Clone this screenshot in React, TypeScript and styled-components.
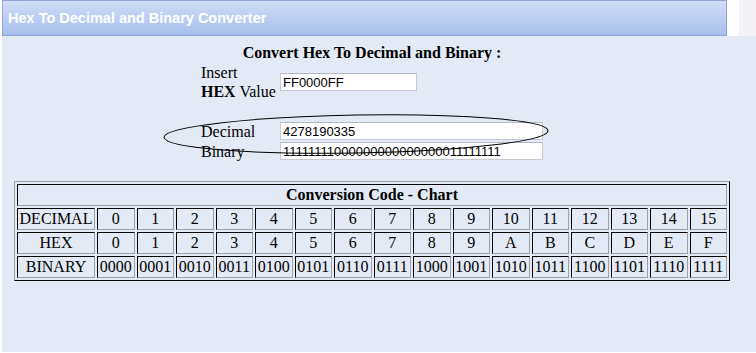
import styled, { createGlobalStyle } from "styled-components";

const GlobalStyle = createGlobalStyle`
  html, body {
    margin: 0;
    padding: 0;
    background: #fff;
  }
  body {
    font-family: "Liberation Serif", "Times New Roman", serif;
    font-size: 16px;
    color: #000;
  }
`;

const decimals = Array.from({ length: 16 }, (_, i) => i);

const App = () => {
  return (
    <Page>
      <GlobalStyle />
      <TopRow>
        <TitleBar>Hex To Decimal and Binary Converter</TitleBar>
        <ScrollStub />
      </TopRow>

      <Panel>
        <Content>
          <Heading>Convert Hex To Decimal and Binary :</Heading>

          <Form>
            <Row>
              <Label>
                Insert
                <br />
                <b>HEX</b> Value
              </Label>
              <Field $w={137} defaultValue="FF0000FF" />
            </Row>

            <Row $top={20}>
              <Label>Decimal</Label>
              <Field $w={263} defaultValue="4278190335" readOnly />
            </Row>
            <Row>
              <Label>Binary</Label>
              <Field $w={263} defaultValue="11111111000000000000000011111111" readOnly />
            </Row>

            <Ring viewBox="0 0 392 46" width="392" height="46">
              <ellipse cx="195" cy="23" rx="192" ry="19" fill="none" stroke="#000" strokeWidth="1" transform="rotate(-1 195 23)" />
            </Ring>
          </Form>

          <Chart>
            <colgroup>
              <Col $w={78} />
              {decimals.map((n) => (
                <Col key={n} />
              ))}
            </colgroup>
            <tbody>
              <tr>
                <Title colSpan={17}>Conversion Code - Chart</Title>
              </tr>
              <tr>
                <Cell>DECIMAL</Cell>
                {decimals.map((n) => (
                  <Cell key={n}>{n}</Cell>
                ))}
              </tr>
              <tr>
                <Cell>HEX</Cell>
                {decimals.map((n) => (
                  <Cell key={n}>{n.toString(16).toUpperCase()}</Cell>
                ))}
              </tr>
              <tr>
                <Cell>BINARY</Cell>
                {decimals.map((n) => (
                  <Cell key={n}>{n.toString(2).padStart(4, "0")}</Cell>
                ))}
              </tr>
            </tbody>
          </Chart>
        </Content>
      </Panel>
    </Page>
  );
};

export default App;

const Page = styled.div`
  width: 756px;
  height: 353px;
  overflow: hidden;
  background: #fff;
`;

const TopRow = styled.div`
  display: flex;
  height: 36px;
`;

const TitleBar = styled.div`
  margin-left: 2px;
  width: 725px;
  height: 36px;
  box-sizing: border-box;
  border: 1px solid #8fa5d6;
  background: linear-gradient(#d0dcf7, #a8bfee);
  color: #fff;
  font-family: "Liberation Sans", Arial, sans-serif;
  font-weight: bold;
  font-size: 14.5px;
  padding-left: 5px;
  padding-bottom: 1px;
  display: flex;
  align-items: center;
`;

const ScrollStub = styled.div`
  margin-left: auto;
  width: 17px;
  background: #f4f2f6;
`;

const Panel = styled.div`
  margin-left: 2px;
  width: 754px;
  height: 316px;
  box-sizing: border-box;
  background: #e4eaf5;
  padding-top: 7px;
`;

const Content = styled.div`
  width: 740px;
  display: flex;
  flex-direction: column;
  align-items: center;
`;

const Heading = styled.div`
  font-weight: bold;
  font-size: 16px;
  line-height: 19px;
`;

const Form = styled.div`
  position: relative;
  width: 342px;
  margin-top: 1px;
`;

const Row = styled.div<{ $top?: number }>`
  display: flex;
  align-items: center;
  min-height: 20px;
  margin-top: ${({ $top }) => $top ?? 0}px;
`;

const Label = styled.div`
  width: 79px;
  line-height: 19px;
  font-size: 16px;
`;

const Field = styled.input<{ $w: number }>`
  width: ${({ $w }) => $w}px;
  height: 18px;
  box-sizing: border-box;
  border: 1px solid #c6cad2;
  border-top-color: #b4b8c0;
  background: #fff;
  padding: 0 2px;
  font-family: "Liberation Sans", Arial, sans-serif;
  font-size: 13px;
  color: #000;
  outline: none;
`;

const Ring = styled.svg`
  position: absolute;
  left: -40px;
  top: 48px;
  pointer-events: none;
`;

const Chart = styled.table`
  margin-top: 20px;
  width: 716px;
  table-layout: fixed;
  border-collapse: separate;
  border-spacing: 2px;
  border: 1px solid #000;
  border-top-color: #a0a0a0;
  border-left-color: #a0a0a0;
  font-size: 16px;
`;

const Col = styled.col<{ $w?: number }>`
  width: ${({ $w }) => ($w ? `${$w}px` : "auto")};
`;

const Title = styled.th`
  padding: 1px;
  font-weight: bold;
  text-align: center;
  border: 1px solid #a0a0a0;
  border-top-color: #000;
  border-left-color: #000;
`;

const Cell = styled.td`
  padding: 1px 0;
  text-align: center;
  white-space: nowrap;
  border: 1px solid #a0a0a0;
  border-top-color: #000;
  border-left-color: #000;
`;
